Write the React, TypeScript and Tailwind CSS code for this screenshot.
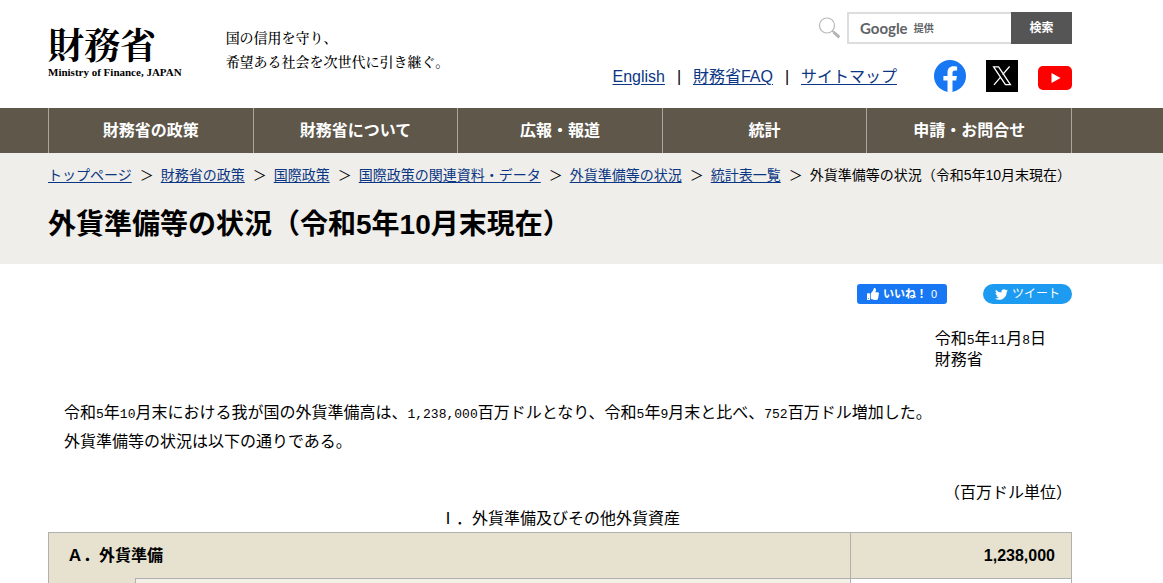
import clsx from 'clsx'
import React from 'react'
import { FaThumbsUp, FaTwitter } from 'react-icons/fa'

const fonts = {
  sans: "font-['Liberation_Sans','Noto_Sans_CJK_JP',sans-serif]",
  serif: "font-['Liberation_Serif','Noto_Serif_CJK_JP','Noto_Sans_CJK_JP',serif]",
}

// shared page gutter
const gutter = 'pl-12 pr-[91px]'

const link = 'text-[#0b3683] underline underline-offset-2'

const navItems = ['財務省の政策', '財務省について', '広報・報道', '統計', '申請・お問合せ']

const crumbs = [
  'トップページ',
  '財務省の政策',
  '国際政策',
  '国際政策の関連資料・データ',
  '外貨準備等の状況',
  '統計表一覧',
]

const SearchBox = () => (
  <form className="flex items-center" onSubmit={(e) => e.preventDefault()}>
    <svg className="mr-[6px] h-[22px] w-[23px]" viewBox="0 0 23 22" fill="none" aria-hidden="true">
      <circle cx="9" cy="8.5" r="7.5" stroke="#b8b8b8" strokeWidth="1.2" />
      <path d="M14.3 13.8 L16 15.5" stroke="#b3b3b3" strokeWidth="1.5" />
      <path d="M15.5 15 L21.3 20.3" stroke="#b3b3b3" strokeWidth="3" />
    </svg>
    <div className="relative">
      <input
        id="search"
        type="text"
        aria-label="サイト内検索"
        className="block h-8 w-[164px] border-2 border-r-0 border-[#ddd] bg-white px-3 text-sm outline-none"
      />
      <label
        htmlFor="search"
        className="absolute inset-y-0 left-[13px] flex items-center gap-[6px] text-[#5f6368]"
      >
        <span className="font-['Lato',sans-serif] text-[15px] font-bold">Google</span>
        <span className="text-[10px] font-bold">提供</span>
      </label>
    </div>
    <button type="submit" className="h-8 w-[61px] bg-[#555] text-xs font-bold text-white">
      検索
    </button>
  </form>
)

const SocialLinks = () => (
  <div className="ml-[37px] flex items-center gap-5">
    <a href="#" aria-label="Facebook">
      <svg className="size-8" viewBox="0 0 32 32">
        <circle cx="16" cy="16" r="16" fill="#1877f2" />
        <path
          d="M22.2 20.6 L22.9 16 H18.5 V13 C18.5 11.7 19.1 10.5 21.1 10.5 H23.1 V6.6 S21.3 6.3 19.5 6.3 C15.9 6.3 13.5 8.5 13.5 12.5 V16 H9.4 V20.6 H13.5 V31.8 A16 16 0 0 0 18.5 31.8 V20.6 Z"
          fill="#fff"
        />
      </svg>
    </a>
    <a href="#" aria-label="X">
      <svg className="size-8" viewBox="0 0 32 32">
        <path d="M0 0 H32 V32 H0 Z" fill="#000" />
        <path
          d="M7.6 6.8 H12.6 L24.4 24.6 H19.4 Z M23.6 6.5 L16.6 14.6 M14.8 16.8 L8 24.8"
          fill="none"
          stroke="#fff"
          strokeWidth="1.3"
        />
      </svg>
    </a>
    <a href="#" aria-label="YouTube">
      <svg className="mt-1 h-6 w-[34px]" viewBox="0 0 34 24">
        <rect width="34" height="24" rx="5" fill="#f00" />
        <path d="M13.5 7 L22.5 12 L13.5 17 Z" fill="#fff" />
      </svg>
    </a>
  </div>
)

const Header = () => (
  <header className={clsx(gutter, 'flex h-[108px] justify-between')}>
    <div className={clsx(fonts.serif, 'flex gap-11 pt-[27px] text-black')}>
      <a href="#" className="block">
        <span className="block text-4xl leading-10 font-bold">財務省</span>
        <span className="block text-[11px] leading-[10px] font-bold">Ministry of Finance, JAPAN</span>
      </a>
      <p className="text-sm leading-6 font-medium">
        国の信用を守り、
        <br />
        希望ある社会を次世代に引き継ぐ。
      </p>
    </div>

    <div className="flex flex-col items-end gap-4 pt-3">
      <SearchBox />
      <div className="flex items-center">
        <div className="flex pt-[2px]">
          <a href="#" className={link}>English</a>
          <span className="w-7 text-center">|</span>
          <a href="#" className={link}>財務省FAQ</a>
          <span className="w-7 text-center">|</span>
          <a href="#" className={link}>サイトマップ</a>
        </div>
        <SocialLinks />
      </div>
    </div>
  </header>
)

const Nav = () => (
  <nav className={clsx(gutter, 'bg-[#5e574a]')}>
    <ul className="grid h-[45px] grid-cols-5 border-l border-[#aaa69d]">
      {navItems.map((item) => (
        <li key={item} className="border-r border-[#aaa69d]">
          <a href="#" className="flex h-full items-center justify-center font-bold text-white">
            {item}
          </a>
        </li>
      ))}
    </ul>
  </nav>
)

const PageTitle = () => (
  <div className={clsx(gutter, 'h-[111px] bg-[#efeeea] pt-[11px]')}>
    <ol className="flex text-sm leading-[22px] whitespace-nowrap">
      {crumbs.map((item) => (
        <li key={item} className="flex">
          <a href="#" className={link}>{item}</a>
          <span className="mr-[7px] ml-2">＞</span>
        </li>
      ))}
      <li>外貨準備等の状況（令和5年10月末現在）</li>
    </ol>
    <h1 className="mt-[19px] text-[28px] leading-10 font-bold">外貨準備等の状況（令和5年10月末現在）</h1>
  </div>
)

const ShareButtons = () => (
  <div className="flex justify-end gap-9">
    <button className="flex h-5 w-[90px] items-center justify-center gap-1 rounded-[3px] bg-[#1877f2] text-[11px] font-bold text-white">
      <FaThumbsUp className="size-3" />
      <span>いいね！</span>
      <span className="font-normal">0</span>
    </button>
    <button className="flex h-5 w-[89px] items-center justify-center gap-1 rounded-full bg-[#1d9bf0] text-xs text-white">
      <FaTwitter className="size-[13px]" />
      ツイート
    </button>
  </div>
)

// half-width figures, leading-none keeps them from stretching the line
const Num = ({ children }: { children: React.ReactNode }) => (
  <span className="font-['Liberation_Mono',monospace] text-[13px] leading-none">{children}</span>
)

const Report = () => (
  <main className={clsx(gutter, 'pt-5')}>
    <ShareButtons />

    <div className="mt-6 flex justify-end pr-[26px] leading-[21px]">
      <p>
        令和<Num>5</Num>年<Num>11</Num>月<Num>8</Num>日
        <br />
        財務省
      </p>
    </div>
    <p className="mt-7 pl-4 leading-[29px]">
      令和<Num>5</Num>年<Num>10</Num>月末における我が国の外貨準備高は、<Num>1,238,000</Num>
      百万ドルとなり、令和<Num>5</Num>年<Num>9</Num>月末と比べ、<Num>752</Num>百万ドル増加した。
      <br />
      外貨準備等の状況は以下の通りである。
    </p>
    <p className="mt-[25px] text-right leading-6">（百万ドル単位）</p>

    <table className="w-full table-fixed border-collapse">
      <caption className="leading-[27px]">Ⅰ．外貨準備及びその他外貨資産</caption>
      <colgroup>
        <col className="w-[87px]" />
        <col />
        <col className="w-[221px]" />
      </colgroup>
      <tbody>
        <tr className="h-[46px] bg-[#e6e2cf]">
          <th colSpan={2} scope="row" className="border border-b-0 border-[#b0b0b0] pl-[18px] text-left font-bold">
            Ａ．外貨準備
          </th>
          <td className="border border-[#b0b0b0] pr-4 text-right font-bold">1,238,000</td>
        </tr>
        <tr className="h-[46px]">
          <td className="border-l border-[#b0b0b0] bg-[#e6e2cf]"></td>
          <td className="border border-[#b0b0b0] bg-[#f3f1e7]"></td>
          <td className="border border-[#b0b0b0]"></td>
        </tr>
      </tbody>
    </table>
  </main>
)

const App = () => {
  return (
    <div className={clsx(fonts.sans, 'h-screen overflow-hidden bg-white text-base text-black')} lang="ja">
      <Header />
      <Nav />
      <PageTitle />
      <Report />
    </div>
  )
}

export default App
